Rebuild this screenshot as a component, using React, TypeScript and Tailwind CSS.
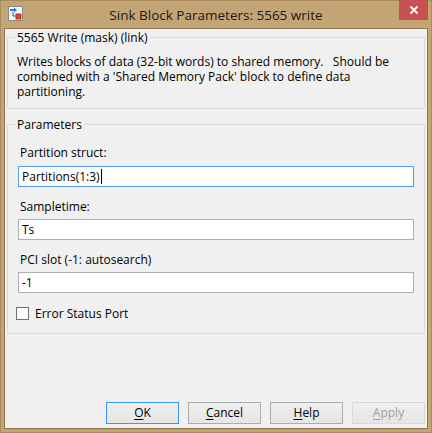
import { ReactNode } from "react";

const TitleIcon = () => (
  <svg width="15" height="15" viewBox="0 0 15 15">
    <rect x="0.5" y="0.5" width="14" height="14" fill="#f4f4f4" stroke="#8a8a8a" />
    <path d="M2 3h4V1.5l3 2.5-3 2.5V5H2z" fill="#2d7fd0" />
    <path d="M5 6v4h3" fill="none" stroke="#555" strokeWidth="1" />
    <rect x="8" y="8" width="5" height="5" fill="#e2462c" stroke="#9a2a18" strokeWidth="0.8" />
  </svg>
);

const GroupBox = ({ title, children, className }: { title: string; children: ReactNode; className?: string }) => (
  <fieldset className={`border border-[#dcdcdc] pl-[7px] pr-[8px] ${className ?? ""}`}>
    <legend className="px-[2px] leading-[15px]">{title}</legend>
    {children}
  </fieldset>
);

const Field = ({ label, value, focused }: { label: string; value: string; focused?: boolean }) => (
  <div className="flex flex-col">
    <div className="leading-[15px] pl-[2px]">{label}</div>
    <div
      className={`h-[21px] bg-white border flex items-center pl-[3px] ${
        focused ? "mt-[6px] border-[#569de5]" : "mt-[5px] border-[#abadb3]"
      }`}
    >
      <span>{value}</span>
      {focused && <span className="w-px h-[15px] bg-black ml-px" />}
    </div>
  </div>
);

const Btn = ({ mn, rest, primary, disabled }: { mn: string; rest: string; primary?: boolean; disabled?: boolean }) => (
  <button
    className={`w-[73px] h-[22px] border bg-gradient-to-b from-[#f0f0f0] to-[#e5e5e5] flex items-center justify-center ${
      primary ? "border-[#3399ff]" : disabled ? "border-[#d9d9d9]" : "border-[#acacac]"
    } ${disabled ? "text-[#a0a0a0]" : "text-black"}`}
  >
    <span className="underline underline-offset-[2px]">{mn}</span>
    {rest}
  </button>
);

export default function App() {
  return (
    <div className="w-[432px] h-[433px] bg-[#c3a474] border border-[#a98b5e] flex flex-col font-['Open_Sans',Arial,sans-serif] text-[12px] text-black">
      <div className="h-[27px] grid grid-cols-[1fr_auto_1fr] items-start">
        <div className="pl-[7px] pt-[5px]">
          <TitleIcon />
        </div>
        <div className="pt-[5px] text-[13.5px] leading-[19px] text-[#1a1a1a]">Sink Block Parameters: 5565 write</div>
        <div className="flex justify-end pr-[3px] -mt-px">
          <div className="w-[29px] h-[20px] bg-[#c75050] flex items-center justify-center">
            <svg width="10" height="10" viewBox="0 0 10 10">
              <path d="M1.5 1.5l7 7M8.5 1.5l-7 7" stroke="white" strokeWidth="1.8" />
            </svg>
          </div>
        </div>
      </div>
      <div className="flex-1 mx-[3px] mb-[3px] border border-[#8d7350] bg-[#f0f0f0] flex flex-col px-[2px]">
        <GroupBox title="5565 Write (mask) (link)" className="mt-[1px]">
          <p className="pl-[2px] pt-[9px] pb-[9px] leading-[15px]">
            Writes blocks of data (32-bit words) to shared memory.&nbsp;&nbsp; Should be combined with a 'Shared
            Memory Pack' block to define data partitioning.
          </p>
        </GroupBox>
        <GroupBox title="Parameters" className="mt-[8px]">
          <div className="flex flex-col gap-[12px] pt-[13px] pl-[3px] pr-[2px]">
            <Field label="Partition struct:" value="Partitions(1:3)" focused />
            <Field label="Sampletime:" value="Ts" />
            <Field label="PCI slot (-1: autosearch)" value="-1" />
          </div>
          <label className="flex items-center gap-[6px] mt-[13px] mb-[12px] pl-[1px]">
            <span className="w-[13px] h-[13px] border border-[#707070] bg-white" />
            <span className="leading-[15px]">Error Status Port</span>
          </label>
        </GroupBox>
        <div className="mt-auto mb-[4px] flex justify-end gap-[9px]">
          <Btn mn="O" rest="K" primary />
          <Btn mn="C" rest="ancel" />
          <Btn mn="H" rest="elp" />
          <Btn mn="A" rest="pply" disabled />
        </div>
      </div>
    </div>
  );
}
